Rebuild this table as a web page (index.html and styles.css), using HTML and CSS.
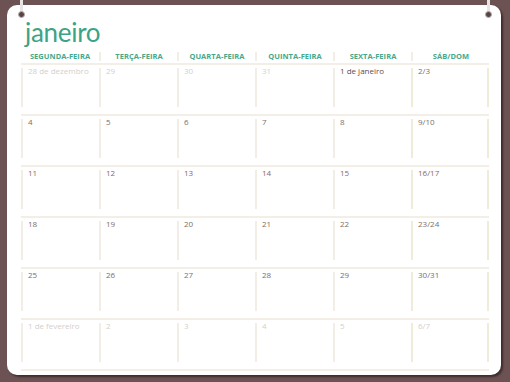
FILE: index.html
```html
<!DOCTYPE html>
<html lang="pt">
<head>
<meta charset="utf-8">
<title>janeiro</title>
<link rel="stylesheet" href="styles.css">
</head>
<body>
<div class="card">
  <span class="ring ring-left"><span class="hole"></span></span>
  <span class="ring ring-right"><span class="hole"></span></span>
  <h1 class="title">janeiro</h1>
  <div class="cal">
    <div class="head">
      <div class="hd">SEGUNDA-FEIRA</div>
      <div class="hd">TERÇA-FEIRA</div>
      <div class="hd">QUARTA-FEIRA</div>
      <div class="hd">QUINTA-FEIRA</div>
      <div class="hd">SEXTA-FEIRA</div>
      <div class="hd">SÁB/DOM</div>
    </div>
    <div class="row">
      <div class="cell other"><span class="d">28 de dezembro</span></div>
      <div class="cell other"><span class="d">29</span></div>
      <div class="cell other"><span class="d">30</span></div>
      <div class="cell other"><span class="d">31</span></div>
      <div class="cell first"><span class="d">1 de janeiro</span></div>
      <div class="cell we"><span class="d">2/3</span></div>
    </div>
    <div class="row">
      <div class="cell"><span class="d">4</span></div>
      <div class="cell"><span class="d">5</span></div>
      <div class="cell"><span class="d">6</span></div>
      <div class="cell"><span class="d">7</span></div>
      <div class="cell"><span class="d">8</span></div>
      <div class="cell we"><span class="d">9/10</span></div>
    </div>
    <div class="row">
      <div class="cell"><span class="d">11</span></div>
      <div class="cell"><span class="d">12</span></div>
      <div class="cell"><span class="d">13</span></div>
      <div class="cell"><span class="d">14</span></div>
      <div class="cell"><span class="d">15</span></div>
      <div class="cell we"><span class="d">16/17</span></div>
    </div>
    <div class="row">
      <div class="cell"><span class="d">18</span></div>
      <div class="cell"><span class="d">19</span></div>
      <div class="cell"><span class="d">20</span></div>
      <div class="cell"><span class="d">21</span></div>
      <div class="cell"><span class="d">22</span></div>
      <div class="cell we"><span class="d">23/24</span></div>
    </div>
    <div class="row">
      <div class="cell"><span class="d">25</span></div>
      <div class="cell"><span class="d">26</span></div>
      <div class="cell"><span class="d">27</span></div>
      <div class="cell"><span class="d">28</span></div>
      <div class="cell"><span class="d">29</span></div>
      <div class="cell we"><span class="d">30/31</span></div>
    </div>
    <div class="row">
      <div class="cell other"><span class="d">1 de fevereiro</span></div>
      <div class="cell other"><span class="d">2</span></div>
      <div class="cell other"><span class="d">3</span></div>
      <div class="cell other"><span class="d">4</span></div>
      <div class="cell other"><span class="d">5</span></div>
      <div class="cell other we"><span class="d">6/7</span></div>
    </div>
  </div>
</div>
</body>
</html>
```
FILE: styles.css
```css
* { box-sizing: border-box; }
html, body {
  margin: 0;
  padding: 0;
  background: #6c5253;
  width: 510px;
  height: 382px;
  overflow: hidden;
}
body {
  padding: 5px 0 0 7px;
  font-family: "Open Sans", "Noto Sans", sans-serif;
}
.card {
  position: relative;
  width: 494px;
  height: 370px;
  background: #ffffff;
  border-radius: 10px;
  box-shadow: 2px 2px 2px rgba(30, 15, 15, 0.55);
  padding: 12px 0 0 14px;
}
.ring {
  position: absolute;
  top: -5px;
  width: 3px;
  height: 14px;
  background: #e6e4e4;
}
.ring-left { left: 13px; }
.ring-right { left: 480px; }
.hole {
  position: absolute;
  left: -2px;
  top: 11px;
  width: 7px;
  height: 7px;
  border-radius: 50%;
  background: #5a4344;
  border: 1px solid #b8b0b0;
}
.title {
  margin: 0 0 0 4px;
  font-family: "Lato", "Open Sans", sans-serif;
  font-weight: 400;
  font-size: 26px;
  line-height: 30px;
  height: 30px;
  letter-spacing: -0.3px;
  color: #3ba387;
}
.cal {
  width: 468px;
  border-bottom: 2px solid #f3efe7;
}
.head {
  display: flex;
  height: 16px;
  padding-top: 5px;
}
.hd {
  width: 78px;
  height: 9px;
  line-height: 9px;
  font-size: 7.5px;
  font-weight: 700;
  color: #45a98a;
  text-align: center;
  letter-spacing: 0.05px;
}
.hd + .hd { border-left: 2px solid #f2eee5; }
.row {
  display: flex;
  height: 51px;
  border-top: 2px solid #f3efe7;
  padding-top: 3px;
}
.cell {
  width: 78px;
  height: 39px;
  border-left: 2px solid #f2eee5;
  padding-left: 5px;
}
.cell.we {
  border-left-color: #efedda;
  border-right: 2px solid #efedda;
}
.d {
  display: block;
  margin-top: -2px;
  font-size: 8px;
  line-height: 10px;
  color: #7d6d6d;
}
.first .d { color: #5c4d4d; }
.other .d { color: #d3cfcc; }
```
